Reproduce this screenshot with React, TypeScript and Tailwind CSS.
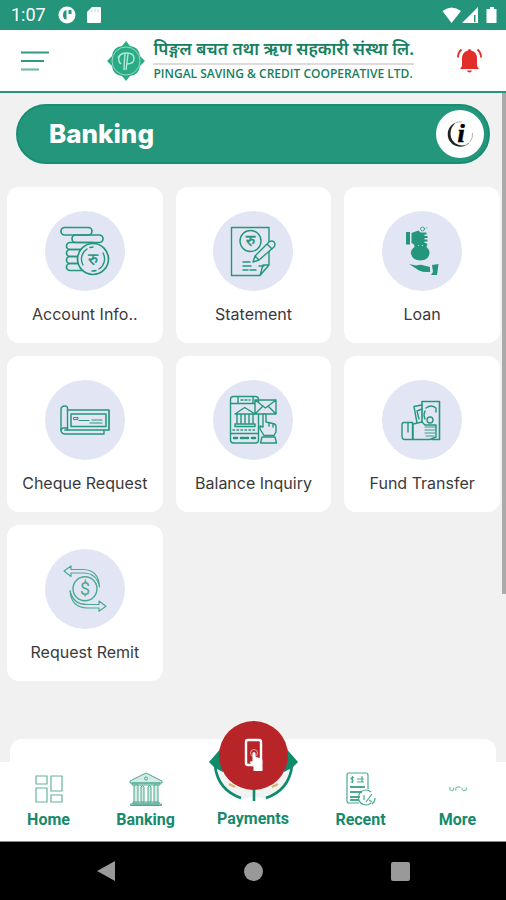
import type { ReactNode } from 'react';

const GREEN = '#24967c';

type TileProps = { label: string; icon: ReactNode };

const TileIcon = ({ children }: { children: ReactNode }) => (
    <svg viewBox="0 0 80 80" className="h-20 w-20" fill="none" stroke={GREEN} strokeWidth="1.4" strokeLinejoin="round" strokeLinecap="round" aria-hidden="true">
        {children}
    </svg>
);

const AccountIcon = () => (
    <TileIcon>
        <g strokeWidth="1.7">
            <rect x="16" y="16.5" width="31" height="7.5" rx="3.7" />
            <rect x="27" y="24" width="31" height="7.5" rx="3.7" />
            {[31.5, 38.5, 45.5, 52.5].map(y => <rect key={y} x="21.5" y={y} width="30" height="7" rx="3.5" />)}
            <circle cx="48" cy="48" r="15.5" fill="#e2e6f4" />
        </g>
        <path d="M38 54a12 12 0 0 1 4-16M45 36.500a12 12 0 0 1 3-.5M58 42a12 12 0 0 1-4 16M51 59.500a12 12 0 0 1-4 .5" />
        <text x="48" y="54" textAnchor="middle" fontSize="17" strokeWidth="0.3" fill={GREEN} fontFamily="Noto Sans Devanagari, Noto Sans, sans-serif">रु</text>
    </TileIcon>
);

const StatementIcon = () => (
    <TileIcon>
        <path d="M18.500 16.500H56V54l-9 10.500H18.500zM56 54h-6l-3 10.500" />
        <circle cx="37.500" cy="30" r="10.500" />
        <text x="37.500" y="35" textAnchor="middle" fontSize="16" strokeWidth="0.4" fill={GREEN} fontFamily="Noto Sans Devanagari, Noto Sans, sans-serif">रु</text>
        <path d="M30 51h7M30 55h8M30 59h5M37 59h6M46 55h5" />
        <path d="M40 51l2-6 14-14q3-2 5 0t0 5L46 49zM42 45l4 4M54 33l5 5" fill="#e2e6f4" />
    </TileIcon>
);

const LoanIcon = () => (
    <TileIcon>
        <g fill={GREEN} stroke="none">
            <path d="M24 21h4v12.500h-4zM29.500 22l7-2.500 2 2h6v2h-2v1.500h3v2h-3v1.500h3v2h-3V32h2v2H33l-3.500-2z" />
            <path d="M32 33h3l1.500 2 2-2 2 2 2-2h3l-1 3q3.500 3 3 6.500-1 6.500-9 7-8.500-.5-9.500-7Q28.500 39 32.500 36z" />
            <path d="M27 53l7 1.500q5-1.500 8 0l6 1.500v5q-7 .5-11-1.500zM50 54l6.500-1-1.500 11h-6l2-3z" />
        </g>
        <circle cx="40.500" cy="18" r="2" strokeWidth="0.8" />
        <path d="M44 17h1" stroke="#53ae98" strokeWidth="0.8" />
    </TileIcon>
);

const ChequeIcon = () => (
    <TileIcon>
        <path d="M22.500 50V28q0-2-3-2t-3.500 3v21q0 4 4.500 4H59v-4" />
        <path d="M16 50q1-3 4.500-2h2M22.500 30H64v20H20" strokeWidth="1.700" />
        <rect x="26" y="34" width="35" height="12.500" strokeWidth="1.500" />
        <path d="M29 37.500h4v2h-4zM34 40.500h10M47 40h10M45 43h12" strokeWidth="1" />
    </TileIcon>
);

const BalanceIcon = () => (
    <TileIcon>
        <rect x="17.500" y="16.500" width="28" height="46.500" rx="3" />
        <path d="M17.500 23.500H45M25 17v6M40 17v6M28 20h2M32 20h2M36 20h1" />
        <path d="M22 34l9.700-6.500L42 34zM24 35v8M28 35v8M32 35v8M36 35v8M40 35v8M22 44h20v2.500H22z" />
        <path d="M20 50h23" strokeDasharray="1.500 2.500" />
        <path d="M17.500 53.500H45" />
        <path d="M21 58h3M28 58h3M33 58h2M39 58h3" strokeWidth="2.500" />
        <path d="M42 20h21v14H42zM42 20l10.500 8L63 20M42 34l8-8M63 34l-8-8" fill="#e2e6f4" />
        <path d="M50 47V35q1.500-2.500 3 0v7l7 1.500q3 .5 3 3V52l-2 3.500H51L47 49v-3z" fill="#e2e6f4" />
        <path d="M49 57h13l1.500 6h-16zM56 43v3M60 44v3" />
    </TileIcon>
);

const FundIcon = () => (
    <TileIcon>
        <path d="M40 44V21.500h17.500V59.500H50" strokeWidth="1.600" />
        <path d="M40 25l-8 1.500L35 43M40 29l-5 2 2 8M44 28q5-4 10 0M54 28v4M43 31q-2 4 0 8" />
        <circle cx="48" cy="40" r="3" />
        <path d="M31 44l9-2 3 3h11v12l-6 2.500H31z" fill="#e2e6f4" />
        <path d="M43 47h11M43 50h10M43 53h10M44 56h8" strokeWidth="0.900" />
        <path d="M22 42.500h8.500V59.500H22q-2-.5-2-3V45q0-2.500 2-2.500zM26 43v9" />
    </TileIcon>
);

const RemitIcon = () => (
    <TileIcon>
        <circle cx="40" cy="39.700" r="12" stroke="#4aa893" />
        <text x="40" y="46" textAnchor="middle" fontSize="18" stroke="none" fill="#4aa893" fontFamily="Roboto, sans-serif">$</text>
        <path d="M54.500 38Q52 24 38 24H26v3.500L19 22l7-5v3.500h12Q54 21 54.500 38z" stroke="#4aa893" strokeWidth="1.200" />
        <path d="M25 41.500Q28 55.500 42 55.500h12V52l7 5.300-7 5V59H42Q26 58.500 25 41.500z" stroke="#4aa893" strokeWidth="1.200" />
    </TileIcon>
);

const tiles: TileProps[] = [
    { label: 'Account Info..', icon: <AccountIcon /> },
    { label: 'Statement', icon: <StatementIcon /> },
    { label: 'Loan', icon: <LoanIcon /> },
    { label: 'Cheque Request', icon: <ChequeIcon /> },
    { label: 'Balance Inquiry', icon: <BalanceIcon /> },
    { label: 'Fund Transfer', icon: <FundIcon /> },
    { label: 'Request Remit', icon: <RemitIcon /> },
];

const Tile = ({ label, icon }: TileProps) => (
    <button className="flex h-[156px] flex-col items-center rounded-xl bg-white pt-6">
        <span className="rounded-full bg-[#e2e6f4]">{icon}</span>
        <span className="mt-[11px] whitespace-nowrap font-['Inter',sans-serif] text-base leading-6 text-[#3a3a3a]">{label}</span>
    </button>
);

const StatusBar = () => (
    <div className="flex h-[30px] items-center bg-[#24947b] pl-[11px] pr-2 text-white">
        <span className="font-['Roboto',sans-serif] text-lg leading-none">1:07</span>
        <svg viewBox="0 0 18 18" className="ml-3 h-[18px] w-[18px]" aria-hidden="true">
            <circle cx="9" cy="9" r="8.500" fill="#fff" />
            <path d="M8.500 4v9.500q-3.500 0-3.500-4.500t3.500-5zM10.500 4h3v4h-3z" fill={GREEN} />
        </svg>
        <svg viewBox="0 0 14 16" className="ml-[11px] h-4 w-[14px]" fill="#fff" aria-hidden="true">
            <path d="M5 0h8q1 0 1 1v14q0 1-1 1H1q-1 0-1-1V5z" />
            <path d="M5 3v2.500M8 2v3.500M11 2v3.500" stroke="#b5dcd2" />
        </svg>
        <svg viewBox="0 0 56 17" className="ml-auto h-[17px] w-14" fill="#fff" aria-hidden="true">
            <path d="M.5 4Q9.500-3 19 4l-9.500 12z" />
            <path d="M36 0v16H20zM32 8v7h1.500V8z" fillRule="evenodd" />
            <path d="M48 0h4v2h2.500v14h-10V2H48z" />
        </svg>
    </div>
);

const Logo = () => (
    <svg viewBox="0 0 38 40" className="h-10 w-[38px] shrink-0" fill="none" aria-hidden="true">
        <path d="M19 0l4 5q9 1 10 10l5 5-5 5q-1 9-10 10l-4 5-4-5Q6 34 5 25l-5-5 5-5Q6 6 15 5z" fill="#2aab85" />
        <circle cx="19" cy="20" r="14" stroke="#95dcc5" />
        <path d="M11 17q2-5 9-5 7 0 7 5.500T20 23M18 13q-1 8-1 16M21 13q-1 8-2 16M13 14q-3 6 1 9" stroke="#b4ead9" strokeWidth="1.400" />
    </svg>
);

const Header = () => (
    <header className="flex h-[63px] items-center border-b-2 border-[#24947b] bg-white pl-[21px] pr-6">
        <button aria-label="Menu" className="shrink-0">
            <svg viewBox="0 0 28 20" className="h-5 w-7" strokeWidth="2.200" aria-hidden="true">
                <path d="M0 1.500h28M0 10h23" stroke="#2d9c83" />
                <path d="M0 18.500h18" stroke="#75b9a9" />
            </svg>
        </button>
        <div className="ml-auto mr-[43px] flex items-center gap-2 text-[#16805f]">
            <Logo />
            <div className="whitespace-nowrap">
                <p className="border-b-2 border-[#dcdcdc] font-['Noto_Sans_Devanagari','Noto_Sans',sans-serif] text-[17px] font-semibold leading-6">पिङ्गल बचत तथा ऋण सहकारी संस्था लि.</p>
                <p className="pt-px font-['Open_Sans',sans-serif] text-xs font-semibold leading-4">PINGAL SAVING &amp; CREDIT COOPERATIVE LTD.</p>
            </div>
        </div>
        <button aria-label="Notifications" className="shrink-0">
            <svg viewBox="0 0 25 25" className="h-[25px] w-[25px]" aria-hidden="true">
                <path d="M12.500 1q1.500 0 1.500 1.500 6 1.500 6 8V18l2 3h-19L5 18v-7.500q0-6.500 6-8Q11 1 12.500 1zM10 22.500h5q-.5 2-2.500 2t-2.500-2z" fill="#e32d2b" />
                <path d="M4.500 1.500Q1 4.500 1 9.500M20.500 1.500Q24 4.500 24 9.500" fill="none" stroke="#e32d2b" strokeWidth="1.800" />
            </svg>
        </button>
    </header>
);

const HomeIcon = () => (
    <svg viewBox="0 0 34 34" className="h-[34px] w-[34px]" fill="none" stroke="#64b29e" strokeWidth="1.200" aria-hidden="true">
        <path d="M4 4h11v8H4zM19 4h11v15H19zM4 16h11v14H4zM19 23h11v7H19z" />
    </svg>
);

const BankIcon = () => (
    <svg viewBox="0 0 34 34" className="h-[34px] w-[34px]" fill="#d3ede4" stroke="#4aa78f" aria-hidden="true">
        <path d="M1 9L17 1l16 8v2H1zM3 11h28v2H3zM4 30h26v2H4zM1.500 32h31v1.500h-31z" />
        <path d="M5 13h4v17H5zM12 15q2-3 3 0v15h-3zM19 15q2-3 3 0v15h-3zM25 13h4v17h-4z" />
        <circle cx="17" cy="6.500" r="1.500" />
    </svg>
);

const RecentIcon = () => (
    <svg viewBox="0 0 34 34" className="h-[34px] w-[34px]" fill="none" stroke="#4ba991" strokeWidth="1.200" aria-hidden="true">
        <path d="M15 31H5q-2 0-2-2V3q0-2 2-2h17q2 0 2 2v14" />
        <path d="M8.500 4v7M10 5.500H8q-2 1 0 2t0 2.500H6.500M13 7h7M13 10h7M18 4v6" />
        <path d="M6 15h15M6 20h12M6 25h10M6 28h9" strokeWidth="1.800" />
        <path d="M27 20a7.500 7.500 0 1 0 0 11M31 26q0 4-3 6" />
        <path d="M20 23v5M22 30l6-8M25 28l3 2" />
    </svg>
);

const MoreIcon = () => (
    <svg viewBox="0 0 34 34" className="h-[34px] w-[34px]" fill="none" stroke="#7bbfae" strokeWidth="1.200" aria-hidden="true">
        <path d="M9 15q-1 3 1.500 3.500t2-3M15 18.500q-1-3 1.500-3.500t2.500 1M22 18.500q4 .5 3.500-3M20.500 16q1 0 1 2" />
    </svg>
);

const PaymentsIcon = () => (
    <svg viewBox="-2 0 110 100" className="h-[100px] w-[110px]" fill="none" aria-hidden="true">
        <path d="M14 57q3 24 26 32l14-2V79L30 70zM93 57q-3 24-26 32l-13-2V79l23-9z" fill="#f1f3f2" />
        <path d="M9 52l14-16v26l-8-4zM98 52L84 36v26l8-4z" fill="#0f8b6c" />
        <path d="M15 56q3 24 26 32M92 56q-3 24-26 32M54 77v14" stroke="#0f8b6c" strokeWidth="2.600" />
        <path d="M29 74l6 3M78 74l-6 3" stroke="#d5b46e" strokeWidth="2" />
        <circle cx="53.500" cy="45.500" r="34.500" fill="#b82529" />
        <rect x="46" y="30" width="15" height="25" rx="2" stroke="#fff" strokeWidth="2.400" />
        <circle cx="54" cy="43" r="3.500" stroke="#e6a5a7" />
        <path d="M52.500 43q1.500-2 3 0v4l5 1q2 .5 2 3v10h-9v-4l-4-5 3-1z" fill="#fff" />
    </svg>
);

const navItems = [
    { label: 'Home', icon: <HomeIcon /> },
    { label: 'Banking', icon: <BankIcon /> },
    { label: 'Payments', icon: <PaymentsIcon />, raised: true },
    { label: 'Recent', icon: <RecentIcon /> },
    { label: 'More', icon: <MoreIcon /> },
];

const BottomNav = () => (
    <nav className="font-['Roboto',sans-serif] text-base font-bold leading-5 text-[#168a6b]">
        <div className="mx-[10px] h-[23px] rounded-t-xl bg-white" />
        <div className="grid h-20 grid-cols-[97fr_97fr_118fr_97fr_97fr] border-b border-[#8a8a8a] bg-white">
            {navItems.map(({ label, icon, raised }) => (
                <button key={label} className={`relative flex flex-col items-center justify-end ${raised ? 'pb-3' : 'pb-[11px]'}`}>
                    {/* the payments badge rises above the bar */}
                    {raised ? <span className="absolute bottom-[31px] left-1/2 -translate-x-1/2">{icon}</span> : icon}
                    <span className="relative mt-1">{label}</span>
                </button>
            ))}
        </div>
    </nav>
);

const AndroidBar = () => (
    <div className="flex h-[58px] items-center justify-between bg-black px-24">
        <button aria-label="Back">
            <svg viewBox="0 0 20 22" className="h-[22px] w-5" fill="#999" aria-hidden="true"><path d="M19 1v20L1 11z" /></svg>
        </button>
        <button aria-label="Home screen" className="h-[19px] w-[19px] rounded-full bg-[#999]" />
        <button aria-label="Overview" className="h-[19px] w-[19px] rounded-xs bg-[#999]" />
    </div>
);

export default function App() {
    return (
        <div className="flex min-h-screen flex-col bg-[#f1f1f1]">
            <StatusBar />
            <Header />
            <main className="relative flex-1">
                <div className="mx-4 mt-[11px] flex h-[60px] items-center justify-between rounded-full border-2 border-[#178f74] bg-[#24967c] pl-[31px] pr-1">
                    <h1 className="font-['Inter',sans-serif] text-[26px] font-extrabold leading-8 text-white">Banking</h1>
                    <button aria-label="Information" className="rounded-full bg-white">
                        <svg viewBox="0 0 48 48" className="h-12 w-12" aria-hidden="true">
                            <path d="M20 12.500A12.500 12.500 0 1 0 34 32a11.500 11.500 0 0 1-19.500-8q0-7 5.500-11.500z" fill="#222" />
                            <path d="M20 12.500q3-1 6-.5M34 32q3-4 2.500-9" fill="none" stroke="#999" strokeWidth="0.800" />
                            <text x="25" y="32" textAnchor="middle" fontSize="26" fontWeight="bold" fontStyle="italic" stroke="#000" strokeWidth="0.600" fontFamily="Liberation Serif, serif">i</text>
                        </svg>
                    </button>
                </div>
                <div className="ml-[7px] mr-[6px] mt-[23px] grid grid-cols-3 gap-[13px]">
                    {tiles.map(tile => <Tile key={tile.label} {...tile} />)}
                </div>
                {/* scroll thumb */}
                <div className="absolute right-0 top-0 h-[501px] w-1 bg-[#aaa]" />
            </main>
            <BottomNav />
            <AndroidBar />
        </div>
    );
}
